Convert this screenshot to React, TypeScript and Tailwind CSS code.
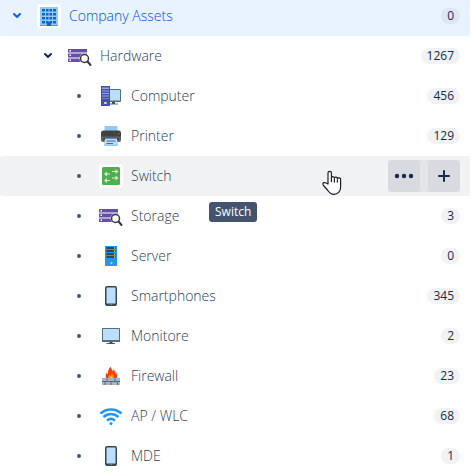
import React from 'react';
import clsx from 'clsx';

const BuildingIcon: React.FC = () => (
  <svg viewBox="0 0 48 48" className="size-6" aria-hidden="true">
    <rect x="6" y="6" width="36" height="38" rx="1" fill="#90caf9" />
    <path d="M6 42h36v2H6z" fill="#42a5f5" />
    {[10, 18, 26, 34].map((y) => (
      <path key={y} d={`M10 ${y}h6v5h-6zM18 ${y}h5v5h-5zM25 ${y}h5v5h-5zM32 ${y}h6v5h-6z`} fill="#1565c0" />
    ))}
    <path d="M20 36h8v8h-8z" fill="#1565c0" />
  </svg>
);

const StorageIcon: React.FC = () => (
  <svg viewBox="0 0 48 48" className="size-6" aria-hidden="true">
    <path d="M0 10h38v7H0zM0 19h38v8H0zM0 29h38v7H0z" fill="#6650a4" />
    <path d="M3 12h3v3H3zM3 21h3v3H3zM3 31h3v3H3z" fill="#fff" />
    <circle cx="33" cy="29" r="10" fill="#fff" />
    <circle cx="33" cy="29" r="8" fill="#fff" stroke="#37373f" strokeWidth="3" />
    <path d="M39 35l6 7" stroke="#37373f" strokeWidth="4" strokeLinecap="round" />
  </svg>
);

const ComputerIcon: React.FC = () => (
  <svg viewBox="0 0 48 48" className="size-6" aria-hidden="true">
    <path d="M20 10h22a2 2 0 0 1 2 2v22a2 2 0 0 1-2 2H20z" fill="#546e7a" />
    <path d="M20 12h22v21H20z" fill="#bbdefb" />
    <path d="M26 36h6v4h-6z" fill="#37474f" />
    <path d="M20 39h18v2H20z" fill="#546e7a" />
    <path d="M4 4h18v40H4z" fill="#3f51b5" />
    <path d="M6 7h14v3H6zM6 13h14v2H6zM6 18h14v2H6zM6 23h14v2H6zM6 28h14v1H6z" fill="#9fa8da" />
    <path d="M10 36h6v4h-6z" fill="#9fa8da" />
    <path d="M11 36h3v4h-3z" fill="#ffeb3b" />
  </svg>
);

const PrinterIcon: React.FC = () => (
  <svg viewBox="0 0 48 48" className="size-6" aria-hidden="true">
    <path d="M11 4h26v12H11z" fill="#90caf9" />
    <path d="M9 13h30a5 5 0 0 1 5 5v8H4v-8a5 5 0 0 1 5-5z" fill="#424242" />
    <path d="M4 25h40v7a4 4 0 0 1-4 4H8a4 4 0 0 1-4-4z" fill="#616161" />
    <path d="M9 29h30v3H9z" fill="#242424" />
    <circle cx="40" cy="19" r="1" fill="#00e676" />
    <path d="M12 29h24l2 13a2 2 0 0 1-2 2H12a2 2 0 0 1-2-2z" fill="#90caf9" />
    <path d="M12 30h24l1 11H11z" fill="#bbdefb" />
    <path d="M15 33h18v2H15zM15 38h13v2H15z" fill="#1976d2" />
  </svg>
);

const SwitchIcon: React.FC = () => (
  <svg viewBox="0 0 48 48" className="size-6" aria-hidden="true">
    <rect x="6" y="6" width="36" height="36" rx="3" fill="#4caf50" />
    <path
      d="M26 14h7v-4l6 5-6 5v-4h-7zM26 27h7v-4l6 5-6 5v-4h-7zM22 19h-6v-4l-6 5 6 5v-4h6zM22 32h-6v-4l-6 5 6 5v-4h6z"
      fill="#dcedc8"
    />
  </svg>
);

const ServerIcon: React.FC = () => (
  <svg viewBox="0 0 48 48" className="size-6" aria-hidden="true">
    <path d="M12 4h24v40H12z" fill="#2196f3" />
    <path d="M15 6h18v4H15zM15 12h18v4H15zM15 18h18v4H15zM15 24h18v4H15z" fill="#37474f" />
    <path d="M30 6h2v4h-2zM30 12h2v4h-2zM30 18h2v4h-2zM30 24h2v4h-2z" fill="#8bc34a" />
    <circle cx="25" cy="38" r="2" fill="#bbdefb" />
  </svg>
);

const PhoneIcon: React.FC = () => (
  <svg viewBox="0 0 48 48" className="size-6" aria-hidden="true">
    <rect x="12" y="4" width="24" height="40" rx="4" fill="#37474f" />
    <rect x="15" y="7" width="18" height="32" rx="1" fill="#bbdefb" />
    <path d="M21 41h6v1h-6z" fill="#90a4ae" />
  </svg>
);

const MonitorIcon: React.FC = () => (
  <svg viewBox="0 0 48 48" className="size-6" aria-hidden="true">
    <rect x="6" y="8" width="36" height="28" rx="1" fill="#546e7a" />
    <path d="M8 10h32v22H8z" fill="#bbdefb" />
    <path d="M21 36h6v3h-6z" fill="#37474f" />
    <path d="M17 38h14l2 2H13z" fill="#455a64" />
  </svg>
);

const FirewallIcon: React.FC = () => (
  <svg viewBox="0 0 48 48" className="size-6" aria-hidden="true">
    <path
      d="M16 30c-4-4-3-9 0-13 0 2 1 3 2 3-1-5 1-10 5-15 0 4 4 6 5 11 1-2 1-4 0-6 5 4 5 7 5 10 1-1 1-2 1-3 3 4 3 9 0 13z"
      fill="#ff3d00"
    />
    <path d="M19 30c-2-4 1-6 3-9 1 2 1 3 1 4 1-2 2-4 2-7 4 4 5 8 4 12z" fill="#ffa000" />
    <path d="M22 30c-1-2 1-3 2-5 2 2 3 3 2 5z" fill="#ffee58" />
    <path d="M6 28h36v14H6z" fill="#a7b5bc" />
    <path d="M6 34h36v2H6zM15 29h2v5h-2zM31 29h2v5h-2zM11 36h2v6h-2zM23 36h2v6h-2zM36 36h2v6h-2z" fill="#546e7a" />
  </svg>
);

const WifiIcon: React.FC = () => (
  <svg viewBox="0 0 48 48" className="size-6" aria-hidden="true" fill="none" stroke="#2196f3" strokeWidth="5">
    <path d="M3 19c12-11 30-11 42 0" />
    <path d="M9 26c9-8 21-8 30 0" />
    <path d="M16 33c5-4 11-4 16 0" />
    <circle cx="24" cy="39" r="3" fill="#2196f3" stroke="none" />
  </svg>
);

const HandCursor: React.FC = () => (
  <svg viewBox="0 0 20 26" className="h-[26px] w-5" aria-hidden="true">
    <path
      d="M6 14V3a1.6 1.6 0 0 1 3.4 0v5a1.5 1.5 0 0 1 3 .2 1.5 1.5 0 0 1 3 .8 1.5 1.5 0 0 1 3.2 1v7c0 4-2.5 7.4-6.6 7.4-3.5 0-5-2-6.5-4.4l-4-4.5c-1-1.5-.8-2.6.4-2.9 1.5-.3 2.8.4 4.1 1.4z"
      fill="#fff"
      stroke="#1d1d2b"
      strokeWidth="1.2"
      strokeLinejoin="round"
    />
    <path d="M9.4 8v4M12.4 8.5v4M15.4 9.5v3" stroke="#1d1d2b" strokeWidth="1.2" />
  </svg>
);

type Item = {
  name: string;
  count?: number;
  level: 0 | 1 | 2;
  icon: React.FC;
  active?: boolean;
  hovered?: boolean;
};

const items: Item[] = [
  { name: 'Company Assets', count: 0, level: 0, icon: BuildingIcon, active: true },
  { name: 'Hardware', count: 1267, level: 1, icon: StorageIcon },
  { name: 'Computer', count: 456, level: 2, icon: ComputerIcon },
  { name: 'Printer', count: 129, level: 2, icon: PrinterIcon },
  { name: 'Switch', level: 2, icon: SwitchIcon, hovered: true },
  { name: 'Storage', count: 3, level: 2, icon: StorageIcon },
  { name: 'Server', count: 0, level: 2, icon: ServerIcon },
  { name: 'Smartphones', count: 345, level: 2, icon: PhoneIcon },
  { name: 'Monitore', count: 2, level: 2, icon: MonitorIcon },
  { name: 'Firewall', count: 23, level: 2, icon: FirewallIcon },
  { name: 'AP / WLC', count: 68, level: 2, icon: WifiIcon },
  { name: 'MDE', count: 1, level: 2, icon: PhoneIcon },
];

const indent = ['pl-[5px]', 'pl-9', 'pl-[67px]'];

const RowActions: React.FC = () => (
  <div className="flex gap-2 rounded-[3px] bg-[#e4e5e9]">
    <button type="button" aria-label="More actions" className="flex size-8 items-center justify-center rounded-[3px] bg-[#d9dadf]">
      <svg viewBox="0 0 20 6" className="h-1.5 w-5" fill="#172b4d" aria-hidden="true">
        <circle cx="3" cy="3" r="2.2" />
        <circle cx="10" cy="3" r="2.2" />
        <circle cx="17" cy="3" r="2.2" />
      </svg>
    </button>
    <button type="button" aria-label="Add" className="flex size-8 items-center justify-center rounded-[3px] bg-[#d9dadf]">
      <svg viewBox="0 0 12 12" className="size-3" stroke="#172b4d" strokeWidth="2" strokeLinecap="round" aria-hidden="true">
        <path d="M6 1v10M1 6h10" />
      </svg>
    </button>
  </div>
);

const TreeRow: React.FC<{ item: Item }> = ({ item }) => {
  const Icon = item.icon;

  return (
    <li
      className={clsx(
        'relative flex h-10 items-center gap-2 rounded-[3px] pr-2.5',
        indent[item.level],
        item.active ? 'bg-[#e9f2ff] text-[#0055cc]' : 'text-[#2c3e5d]',
        item.hovered && 'bg-[#f1f2f4]'
      )}
    >
      {item.level < 2 ? (
        <button
          type="button"
          aria-label={`Collapse ${item.name}`}
          className={clsx('flex size-6 items-center justify-center', item.active ? 'text-[#0c66e4]' : 'text-[#172b4d]')}
        >
          <svg viewBox="0 0 10 6" className="h-1.5 w-2.5" fill="none" stroke="currentColor" strokeWidth="2" strokeLinecap="round" strokeLinejoin="round" aria-hidden="true">
            <path d="M2 1l3 3 3-3" />
          </svg>
        </button>
      ) : (
        <span className="flex size-6 items-center justify-center">
          <span className="size-1 rounded-full bg-[#44546f]"></span>
        </span>
      )}
      <span className="size-6 shrink-0 rounded-[3px] bg-white">
        <Icon />
      </span>
      <a href="#" className="flex-1 truncate font-light">
        {item.name}
      </a>
      {item.count !== undefined && (
        <span
          className={clsx(
            'rounded-full px-1.5 text-xs text-[#172b4d]',
            item.active ? 'bg-[#dde6f5]' : 'bg-[#f1f2f4]'
          )}
        >
          {item.count}
        </span>
      )}
      {item.hovered && (
        <>
          <RowActions />
          {/* Pointer and tooltip float above the rows */}
          <span className="pointer-events-none absolute top-3.5 right-32">
            <HandCursor />
          </span>
          <span role="tooltip" className="absolute top-[46px] left-[209px] z-10 rounded-[3px] bg-[#44546f] px-1.5 py-0.5 text-xs text-white">
            {item.name}
          </span>
        </>
      )}
    </li>
  );
};

const App: React.FC = () => {
  return (
    <main className="h-screen overflow-hidden bg-white pr-0.5 font-['Open_Sans','Noto_Sans',sans-serif] text-sm">
      <ul className="-mt-1">
        {items.map((item) => (
          <TreeRow key={item.name} item={item} />
        ))}
      </ul>
    </main>
  );
};

export default App;
